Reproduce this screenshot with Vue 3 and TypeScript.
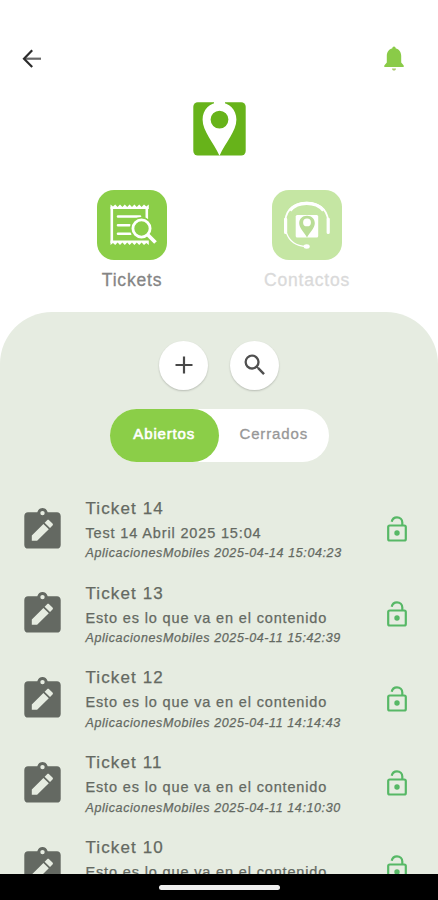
<script setup lang="ts">
interface Ticket {
  id: number
  body: string
  date: string
}

const body = 'Esto es lo que va en el contenido'
const tickets: Ticket[] = [
  { id: 14, body: 'Test 14 Abril 2025 15:04', date: '2025-04-14 15:04:23' },
  { id: 13, body, date: '2025-04-11 15:42:39' },
  { id: 12, body, date: '2025-04-11 14:14:43' },
  { id: 11, body, date: '2025-04-11 14:10:30' },
  { id: 10, body, date: '2025-04-11 14:05:12' },
]
</script>

<template>
  <div class="screen">
    <header class="top">
      <svg class="back" viewBox="0 0 20 20" fill="none" stroke="#2c2c2c" stroke-width="2.200">
        <path d="M2 9.700h17" stroke="#6a6a6a" /><path d="M10.200 1.300 2 9.700l8.200 8.400" />
      </svg>
      <svg class="bell" viewBox="0 0 20 26">
        <path d="M10 .5c-1 0-1.600.8-1.600 1.800C4.900 3.300 2.800 6.200 2.800 9.800V16.500L.3 19.500V21h19.400v-1.500L17.200 16.500V9.800c0-3.600-2.100-6.500-5.600-7.500C11.600 1.300 11 .5 10 .5z" fill="#8acb48" />
        <path d="M8 22.400h4c0 1.200-.8 2.200-2 2.200s-2-1-2-2.200z" fill="#a9c96f" />
      </svg>
    </header>

    <svg class="logo" viewBox="0 0 53 54">
      <rect x=".3" y=".3" width="52.400" height="53.200" rx="4.500" fill="#67b31a" />
      <path d="M21 0h11v3H21z" fill="#fff" />
      <path fill-rule="evenodd" d="M26.500 .5C16.800 .5 9.600 7.800 9.600 17.500c0 12 10.800 22.500 16.900 36.300 6.100-13.800 16.900-24.300 16.900-36.300C43.400 7.800 36.200 .5 26.500 .5zM26.500 8.700a8.900 8.900 0 1 1 0 17.800 8.900 8.900 0 0 1 0-17.800z" fill="#fff" />
    </svg>

    <nav class="sections">
      <div class="section">
        <svg class="tile" viewBox="0 0 70 70">
          <rect width="70" height="70" rx="17" fill="#8bce48" />
          <path fill="#fff" d="M13.500 19V14.500l2.500 2 2.200-2 2.400 2.500 2.400-2.500 2.400 2.500 2.400-2.500 2.400 2.500 2.400-2.500 2.400 2.500 2.400-2.500 2.400 2.500 2.400-2.500 2.400 2.500 2.400-2.500 2.300 2 2.500-2V19z" />
          <path fill="#fff" d="M13.500 50.500V55l2.500-2 2.200 2 2.400-2.500 2.400 2.500 2.400-2.500 2.400 2.500 2.400-2.500 2.400 2.500 2.400-2.500 2.400 2.500 2.400-2.500 2.400 2.500 2.400-2.500 2.400 2.500 2.300-2 2.500 2V50.500z" />
          <g fill="none" stroke="#fff">
            <path d="M14.800 17v36M49.800 17v12" stroke-width="2.600" />
            <path d="M21 26.500h22M21 35.200h11.500M21 43.700h12.500" stroke-width="2.600" stroke-linecap="round" />
            <circle cx="44.500" cy="38.500" r="11.500" fill="#8bce48" stroke="none" />
            <circle cx="44.500" cy="38.500" r="8.600" stroke-width="2.800" />
            <path d="m50.500 44.500 8 8" stroke-width="3.800" />
          </g>
        </svg>
        <span class="label tickets">Tickets</span>
      </div>
      <div class="section">
        <svg class="tile" viewBox="0 0 70 70">
          <rect width="70" height="70" rx="17" fill="#c5e6a3" />
          <g fill="none" stroke="#fff" stroke-linecap="round">
            <path d="M13.500 30C14.200 19 23 12.600 34.700 12.600S55.200 19 55.900 30" stroke-width="1.800" />
            <path d="M18 20.500C22 15.700 27.500 13.400 34.700 13.400S47.500 15.700 51.500 20.500" stroke-width="3.400" stroke-linecap="butt" />
            <path d="M13.600 29v13.500M56.200 29v13.500" stroke-width="3.200" />
            <path d="M14.500 43C17.500 51.500 24 56 34 56.500" stroke-width="1.300" />
          </g>
          <ellipse cx="34.700" cy="56.500" rx="3" ry="2.200" fill="#fff" />
          <rect x="23.700" y="25" width="22.500" height="22.500" rx="1.500" fill="#fff" />
          <path fill-rule="evenodd" d="M35 25.700c-4.900 0-7.800 3.200-7.800 7.500 0 5 5 8.700 7.800 14.300 2.800-5.600 7.800-9.300 7.800-14.300 0-4.300-2.900-7.500-7.800-7.500zm0 2.800a3.900 3.900 0 1 1 0 7.800 3.900 3.900 0 0 1 0-7.800z" fill="#b9dd96" />
        </svg>
        <span class="label contacts">Contactos</span>
      </div>
    </nav>

    <main class="panel">
      <div class="actions">
        <button class="round" aria-label="Nuevo">
          <svg viewBox="0 0 28 28" fill="none" stroke="#484848" stroke-width="2.200"><path d="M14 5.500v17M5.500 14h17" /></svg>
        </button>
        <button class="round" aria-label="Buscar">
          <svg viewBox="0 0 24 24" fill="#505050"><path d="M15.500 14h-.79l-.28-.27A6.471 6.471 0 0 0 16 9.500 6.500 6.500 0 1 0 9.500 16c1.610 0 3.090-.59 4.230-1.570l.27.28v.79l5 4.990L20.490 19l-4.990-5zm-6 0C7.010 14 5 11.990 5 9.500S7.010 5 9.500 5 14 7.010 14 9.500 11.990 14 9.500 14z" /></svg>
        </button>
      </div>
      <div class="toggle">
        <button class="tab active">Abiertos</button>
        <button class="tab">Cerrados</button>
      </div>
      <ul class="list">
        <li v-for="t in tickets" :key="t.id" class="row">
          <svg class="clip" viewBox="0 0 37 41">
            <path fill="#646962" fill-rule="evenodd" d="M4 4.200h9.300C14 1.700 16.200.1 18.500.1s4.500 1.600 5.200 4.100H33c2.100 0 3.700 1.600 3.700 3.700v29c0 2.100-1.600 3.700-3.700 3.700H4C1.900 40.600.3 39 .3 36.900v-29C.3 5.800 1.900 4.200 4 4.200zM18.500 2.900a2.200 2.200 0 1 0 0 4.400 2.200 2.200 0 0 0 0-4.400zM7.800 27.500v5.300h5.300L24.800 21.300l-5.400-5.400zM20.600 14.700l5.400 5.400 2.500-2.600c.6-.6.6-1.400 0-2l-3.400-3.300c-.6-.6-1.400-.6-2 0z" />
          </svg>
          <div class="info">
            <span class="title">Ticket {{ t.id }}</span>
            <span class="body">{{ t.body }}</span>
            <span class="meta">AplicacionesMobiles {{ t.date }}</span>
          </div>
          <svg class="lock" viewBox="0 0 20 26" fill="none" stroke="#57b866">
            <rect x="1.200" y="9.500" width="17.600" height="15" rx="1.500" stroke-width="2.200" />
            <path d="M4.700 5.800C5.300 3 7.300 1.400 10 1.400c3 0 5.300 2.200 5.300 5.200v3" stroke-width="2.200" />
            <circle cx="10" cy="17" r="2.700" fill="#57b866" stroke="none" />
          </svg>
        </li>
      </ul>
    </main>

    <footer class="system"><span class="pill"></span></footer>
  </div>
</template>

<style>
body {
  background: #fff;
}
</style>

<style scoped>
.screen {
  display: flex;
  flex-direction: column;
  width: 438px;
  height: 900px;
  overflow: hidden;
  background: #fff;
  font-family: "Liberation Sans", Arial, sans-serif;
}
.top {
  display: flex;
  flex: none;
  align-items: center;
  justify-content: space-between;
  height: 56px;
  margin-top: 31px;
  padding: 0 34px 0 22px;
}
.back {
  width: 20px;
  height: 20px;
}
.bell {
  width: 20px;
  height: 26px;
}
.logo {
  flex: none;
  align-self: center;
  width: 53px;
  height: 54px;
  margin-top: 15px;
}
.sections {
  display: flex;
  flex: none;
  justify-content: center;
  gap: 55px;
  height: 122px;
  margin-top: 34px;
  padding-left: 1px;
}
.section {
  display: flex;
  flex-direction: column;
  align-items: center;
  width: 120px;
}
.tile {
  width: 70px;
  height: 70px;
}
.label {
  margin-top: 9px;
  font-size: 17.500px;
  line-height: 22px;
  letter-spacing: 0.8px;
}
.tickets {
  color: #858585;
  -webkit-text-stroke: 0.3px #858585;
}
.contacts {
  color: #dadada;
  -webkit-text-stroke: 0.3px #dadada;
}
.panel {
  display: flex;
  flex: 1;
  flex-direction: column;
  align-items: center;
  min-height: 0;
  overflow: hidden;
  border-radius: 52px 52px 0 0;
  background: #e6ece1;
}
.actions {
  display: flex;
  flex: none;
  gap: 22px;
  margin-top: 28.500px;
}
.round {
  display: flex;
  align-items: center;
  justify-content: center;
  width: 49px;
  height: 49px;
  padding: 0;
  border: 0;
  border-radius: 50%;
  background: #fff;
  box-shadow: 0 1px 2px rgba(0, 0, 0, 0.2);
}
.round svg {
  width: 28px;
  height: 28px;
}
.toggle {
  display: flex;
  flex: none;
  width: 219px;
  height: 53px;
  margin-top: 19px;
  border-radius: 27px;
  background: #fff;
}
.tab {
  flex: 1;
  padding: 0 0 2px;
  border: 0;
  border-radius: 27px;
  background: none;
  color: #979797;
  font: 15px/50px "Liberation Sans", Arial, sans-serif;
  letter-spacing: 0.85px;
  -webkit-text-stroke: 0.3px #979797;
}
.tab.active {
  background: #8bce48;
  color: #fff;
  -webkit-text-stroke: 0.6px #fff;
}
.list {
  align-self: stretch;
  margin: 33px 0 0;
  padding: 0;
  list-style: none;
}
.row {
  display: flex;
  align-items: flex-start;
  height: 84.750px;
  padding: 0 31px 0 24px;
}
.clip {
  flex: none;
  width: 37px;
  height: 41px;
  margin-top: 13px;
}
.info {
  display: flex;
  flex: 1;
  flex-direction: column;
  margin-left: 24.500px;
  color: #646962;
  white-space: nowrap;
  -webkit-text-stroke: 0.25px #646962;
}
.title {
  margin-top: 3.300px;
  font-size: 17px;
  line-height: 22px;
  letter-spacing: 1.100px;
}
.body {
  margin-top: 3px;
  font-size: 14.500px;
  line-height: 20px;
  letter-spacing: 0.850px;
}
.meta {
  margin-top: 2.700px;
  font-size: 12.500px;
  font-style: italic;
  line-height: 16px;
  letter-spacing: 0.6px;
}
.lock {
  flex: none;
  width: 20px;
  height: 26px;
  margin-top: 21.500px;
}
.system {
  display: flex;
  flex: none;
  align-items: center;
  justify-content: center;
  height: 26px;
  background: #000;
}
.pill {
  width: 121px;
  height: 5px;
  border-radius: 3px;
  background: #efefef;
}
</style>
